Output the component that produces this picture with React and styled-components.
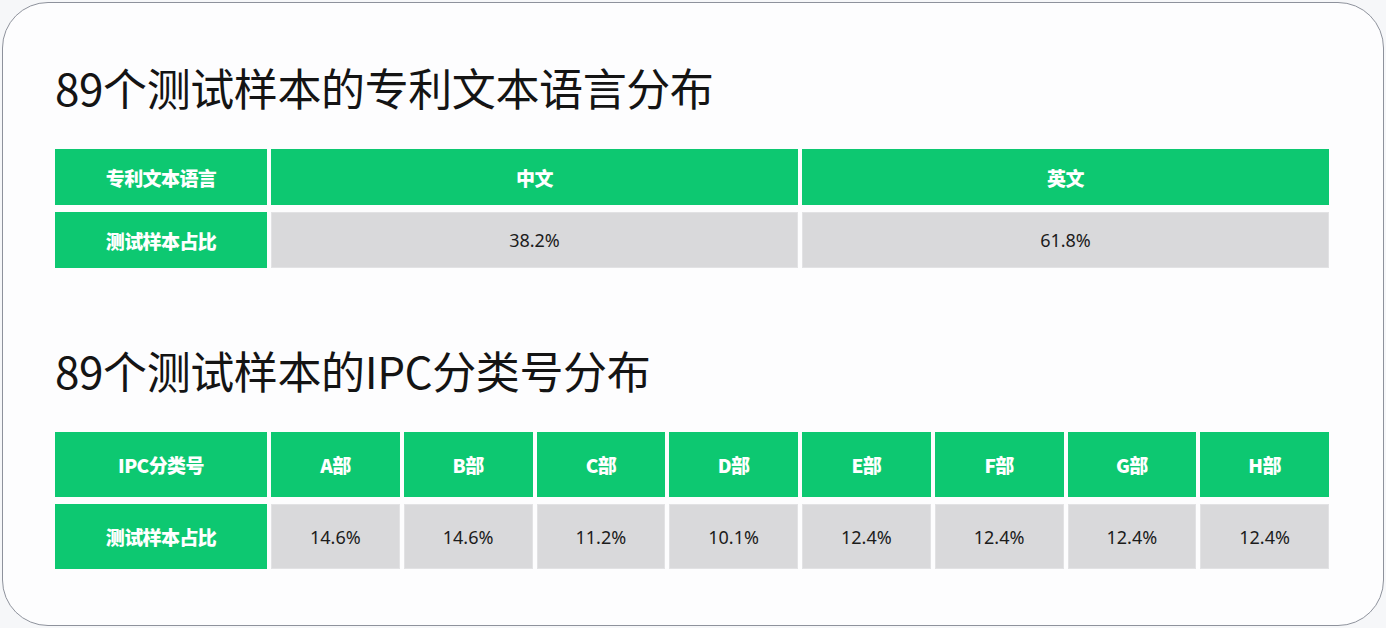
import React from 'react';
import styled, { createGlobalStyle } from 'styled-components';

const GlobalStyle = createGlobalStyle`
  html, body {
    margin: 0;
    padding: 0;
    background: #f6f7f9;
  }
  * {
    box-sizing: border-box;
  }
`;

const Card = styled.div`
  margin: 2px;
  width: 1382px;
  height: 624px;
  border: 1.5px solid #8e929c;
  border-radius: 46px;
  background: #fdfdfe;
  padding: 56px 53px 0 52px;
  font-family: "Noto Sans", "Noto Sans CJK SC", sans-serif;
`;

const Title = styled.h2`
  margin: ${(p) => (p.$first ? '0' : '74px')} 0 34px 0;
  font-family: "Noto Sans CJK SC", "Noto Sans", sans-serif;
  font-weight: 400;
  font-size: 44px;
  line-height: 56px;
  letter-spacing: -0.4px;
  color: #141414;
`;

const Table = styled.div`
  display: grid;
  grid-template-columns: 212px repeat(${(p) => p.$cols}, 1fr);
  column-gap: 4px;
  row-gap: 7px;
  width: 1274px;
`;

const Cell = styled.div`
  display: flex;
  align-items: center;
  justify-content: center;
  height: ${(p) => p.$h}px;
  background: ${(p) => (p.$head ? '#0dc871' : '#d9d9db')};
  color: ${(p) => (p.$head ? '#ffffff' : '#1c1c1c')};
  font-family: ${(p) =>
    p.$head
      ? '"Noto Sans CJK SC", "Noto Sans", sans-serif'
      : '"Noto Sans", "Noto Sans CJK SC", sans-serif'};
  font-weight: ${(p) => (p.$head ? 900 : 400)};
  font-size: ${(p) => (p.$head ? 19 : 18)}px;
  letter-spacing: ${(p) => (p.$head ? '-0.6px' : '0')};
  box-shadow: ${(p) => (p.$head ? 'none' : 'inset 0 0 0 1px #e2e2e4')};
`;

const langHead = ['专利文本语言', '中文', '英文'];
const langRow = ['测试样本占比', '38.2%', '61.8%'];

const ipcHead = ['IPC分类号', 'A部', 'B部', 'C部', 'D部', 'E部', 'F部', 'G部', 'H部'];
const ipcRow = ['测试样本占比', '14.6%', '14.6%', '11.2%', '10.1%', '12.4%', '12.4%', '12.4%', '12.4%'];

const DataTable = ({ head, row, h }) => (
  <Table $cols={head.length - 1}>
    {head.map((t, i) => (
      <Cell key={'h' + i} $head $h={h}>{t}</Cell>
    ))}
    {row.map((t, i) => (
      <Cell key={'r' + i} $head={i === 0} $h={h}>{t}</Cell>
    ))}
  </Table>
);

export default function App() {
  return (
    <>
      <GlobalStyle />
      <Card>
        <Title $first>89个测试样本的专利文本语言分布</Title>
        <DataTable head={langHead} row={langRow} h={56} />
        <Title>89个测试样本的IPC分类号分布</Title>
        <DataTable head={ipcHead} row={ipcRow} h={65} />
      </Card>
    </>
  );
}
